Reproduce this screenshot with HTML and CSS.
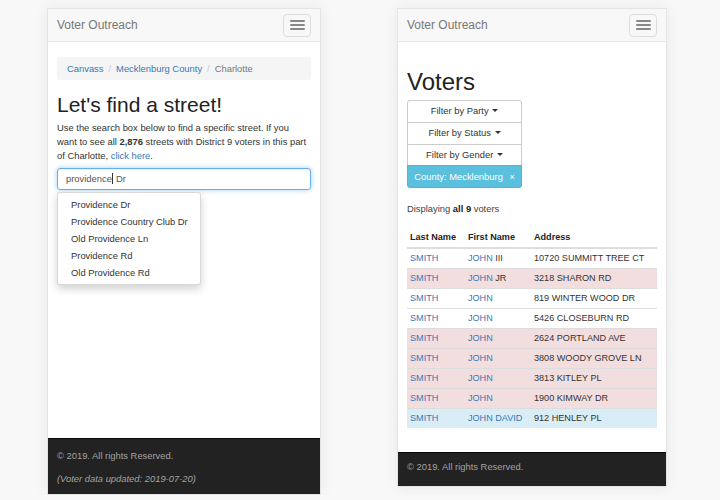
FILE: index.html
```html
<!DOCTYPE html>
<html lang="en">
<head>
<meta charset="utf-8">
<title>Voter Outreach</title>
<link rel="stylesheet" href="styles.css">
</head>
<body>
<div class="stage">
  <div class="phone phone-left">
    <nav class="navbar">
      <span class="brand">Voter Outreach</span>
      <button class="toggle" type="button"><span class="bar"></span><span class="bar"></span><span class="bar"></span></button>
    </nav>
    <main class="content content-left">
      <ol class="breadcrumb">
        <li><a href="#">Canvass</a></li>
        <li><a href="#">Mecklenburg County</a></li>
        <li class="active">Charlotte</li>
      </ol>
      <h1 class="title-street">Let's find a street!</h1>
      <p class="intro">Use the search box below to find a specific street. If you<br>want to see all <strong>2,876</strong> streets with District 9 voters in this part<br>of Charlotte, <a href="#">click here</a>.</p>
      <div class="search">
        <div class="search-input">providence<span class="cursor"></span> Dr</div>
        <ul class="dropdown">
          <li>Providence Dr</li>
          <li>Providence Country Club Dr</li>
          <li>Old Providence Ln</li>
          <li>Providence Rd</li>
          <li>Old Providence Rd</li>
        </ul>
      </div>
    </main>
    <footer class="footer footer-left">
      <p>© 2019. All rights Reserved.</p>
      <p class="updated">(Voter data updated: 2019-07-20)</p>
    </footer>
  </div>

  <div class="phone phone-right">
    <nav class="navbar">
      <span class="brand">Voter Outreach</span>
      <button class="toggle" type="button"><span class="bar"></span><span class="bar"></span><span class="bar"></span></button>
    </nav>
    <main class="content content-right">
      <h1 class="title-voters">Voters</h1>
      <div class="btn-group">
        <button class="btn" type="button">Filter by Party <span class="caret"></span></button>
        <button class="btn" type="button">Filter by Status <span class="caret"></span></button>
        <button class="btn" type="button">Filter by Gender <span class="caret"></span></button>
        <button class="btn btn-info" type="button">County: Mecklenburg <span class="remove">×</span></button>
      </div>
      <p class="count">Displaying <strong>all 9</strong> voters</p>
      <table class="voters">
        <thead>
          <tr><th class="col-last">Last Name</th><th class="col-first">First Name</th><th>Address</th></tr>
        </thead>
        <tbody>
          <tr><td><a href="#">SMITH</a></td><td><a href="#">JOHN</a> III</td><td>10720 SUMMITT TREE CT</td></tr>
          <tr class="danger"><td><a href="#">SMITH</a></td><td><a href="#">JOHN</a> JR</td><td>3218 SHARON RD</td></tr>
          <tr><td><a href="#">SMITH</a></td><td><a href="#">JOHN</a></td><td>819 WINTER WOOD DR</td></tr>
          <tr><td><a href="#">SMITH</a></td><td><a href="#">JOHN</a></td><td>5426 CLOSEBURN RD</td></tr>
          <tr class="danger"><td><a href="#">SMITH</a></td><td><a href="#">JOHN</a></td><td>2624 PORTLAND AVE</td></tr>
          <tr class="danger"><td><a href="#">SMITH</a></td><td><a href="#">JOHN</a></td><td>3808 WOODY GROVE LN</td></tr>
          <tr class="danger"><td><a href="#">SMITH</a></td><td><a href="#">JOHN</a></td><td>3813 KITLEY PL</td></tr>
          <tr class="danger"><td><a href="#">SMITH</a></td><td><a href="#">JOHN</a></td><td>1900 KIMWAY DR</td></tr>
          <tr class="info"><td><a href="#">SMITH</a></td><td><a href="#">JOHN DAVID</a></td><td>912 HENLEY PL</td></tr>
        </tbody>
      </table>
    </main>
    <footer class="footer footer-right">
      <p>© 2019. All rights Reserved.</p>
      <p class="updated">(Voter data updated: 2019-07-20)</p>
    </footer>
  </div>
</div>
</body>
</html>
```

FILE: styles.css
```css
* { box-sizing: border-box; }

body {
  margin: 0;
  background: #f8f8f8;
  font-family: "Liberation Sans", Arial, Helvetica, sans-serif;
  font-size: 9.4px;
  line-height: 14px;
  color: #333;
}

a { color: #337ab7; text-decoration: none; }

.stage {
  display: flex;
  align-items: flex-start;
  gap: 76px;
  padding: 8px 0 0 47px;
}

.phone {
  display: flex;
  flex-direction: column;
  overflow: hidden;
  background: #fff;
  border: 1px solid #e4e4e4;
  box-shadow: 0 0 14px rgba(0, 0, 0, 0.07);
}

.phone-left { width: 274px; height: 487px; }
.phone-right { width: 270px; height: 479px; }

.navbar {
  flex-shrink: 0;
  height: 33px;
  display: flex;
  align-items: center;
  justify-content: space-between;
  padding: 0 9px;
  background: #f8f8f8;
  border-bottom: 1px solid #e7e7e7;
}

.brand { font-size: 12px; color: #777; }

.toggle {
  width: 28px;
  height: 23px;
  padding: 0;
  display: flex;
  flex-direction: column;
  align-items: center;
  justify-content: center;
  gap: 2.6px;
  background: transparent;
  border: 1px solid #ddd;
  border-radius: 4px;
}

.toggle .bar {
  display: block;
  width: 15px;
  height: 1.5px;
  border-radius: 1px;
  background: #888;
}

.content { padding: 0 9px; }
.content-left { flex: 1; }

/* breadcrumb */
.breadcrumb {
  display: flex;
  margin: 15px 0 0;
  padding: 5px 10px;
  list-style: none;
  background: #f5f5f5;
  border-radius: 3px;
  line-height: 13px;
}

.breadcrumb li + li::before {
  content: "/";
  padding: 0 5px 0 5px;
  color: #ccc;
}

.breadcrumb .active { color: #777; }

.title-street {
  margin: 13px 0 0;
  font-size: 21px;
  line-height: 23px;
  font-weight: 500;
  color: #222;
}

.intro { margin: 5px 0 0; }

.search { position: relative; margin-top: 5px; }

.search-input {
  height: 22px;
  padding: 3px 8px;
  line-height: 14px;
  border: 1px solid #66afe9;
  border-radius: 3px;
  box-shadow: inset 0 1px 1px rgba(0, 0, 0, 0.075), 0 0 5px rgba(102, 175, 233, 0.6);
  color: #555;
}

.cursor {
  display: inline-block;
  width: 1px;
  height: 11px;
  margin-left: 0.5px;
  vertical-align: -2px;
  background: #333;
}

.dropdown {
  position: absolute;
  top: 24px;
  left: 0;
  width: 144px;
  margin: 0;
  padding: 3px 0;
  list-style: none;
  background: #fff;
  border: 1px solid rgba(0, 0, 0, 0.15);
  border-radius: 3px;
  box-shadow: 0 4px 8px rgba(0, 0, 0, 0.18);
}

.dropdown li {
  padding: 0 13px;
  line-height: 17px;
  white-space: nowrap;
  color: #333;
}

/* footer */
.footer {
  flex-shrink: 0;
  padding: 10px 9px 0;
  background: #222;
  border-top: 1px solid #080808;
  color: #a3a3a3;
}

.footer p { margin: 0; }
.footer .updated { margin-top: 9px; font-style: italic; }
.footer-left { height: 56px; }
.footer-right { margin-top: 24px; padding-top: 7px; height: 60px; }

/* right phone */
.title-voters {
  margin: 27px 0 0;
  font-size: 24px;
  line-height: 26px;
  font-weight: 500;
  color: #222;
}

.btn-group {
  display: flex;
  flex-direction: column;
  width: 115px;
  margin-top: 5px;
}

.btn {
  height: 22.75px;
  padding: 0 6px;
  font: inherit;
  color: #333;
  background: #fff;
  border: 1px solid #ccc;
  border-radius: 0;
  text-align: center;
}

.btn + .btn { margin-top: -1px; }
.btn:first-child { border-radius: 3px 3px 0 0; }
.btn:last-child { border-radius: 0 0 3px 3px; }

.btn-info {
  color: #fff;
  background: #5bc0de;
  border-color: #46b8da;
}

.caret {
  display: inline-block;
  width: 0;
  height: 0;
  margin-left: 1px;
  vertical-align: 2px;
  border-top: 3px solid #333;
  border-left: 3px solid transparent;
  border-right: 3px solid transparent;
}

.remove { margin-left: 4px; font-size: 9px; }

.count { margin: 14px 0 0; color: #444; }
.count strong { color: #222; }

.voters {
  width: 100%;
  margin-top: 12px;
  border-collapse: collapse;
  font-size: 9.1px;
  line-height: 13px;
}

.voters th,
.voters td {
  padding: 3px 3px;
  text-align: left;
  white-space: nowrap;
}

.voters th {
  font-weight: bold;
  color: #222;
  border-bottom: 2px solid #ddd;
}

.voters td { border-top: 1px solid #ddd; }
.voters tbody tr:first-child td { border-top: 0; }
.voters .col-last { width: 58px; }
.voters .col-first { width: 66px; }

.voters .danger td { background: #f2dede; }
.voters .info td { background: #d9edf7; }
```
